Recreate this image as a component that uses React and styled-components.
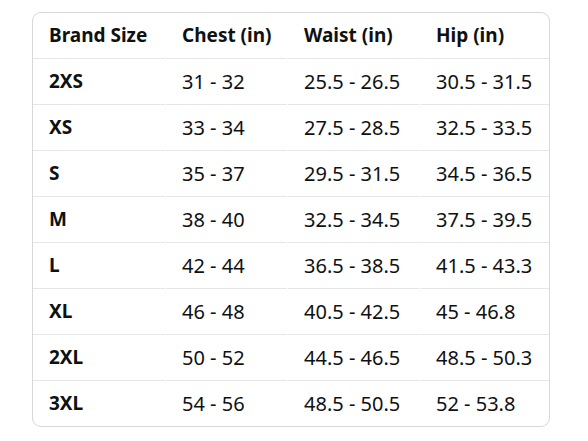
import React from 'react'
import styled, { createGlobalStyle } from 'styled-components'

const Global = createGlobalStyle`
    body {
        margin: 0;
        background: #ffffff;
        font-family: "Noto Sans", "Open Sans", Arial, sans-serif;
        color: #0f1111;
    }
`

const Page = styled.div`
    padding: 12px 0 0 32px;
`

const Card = styled.div`
    width: 516px;
    border: 1px solid #d5d9d9;
    border-radius: 9px;
    overflow: hidden;
`

const Table = styled.table`
    width: 518px;
    border-collapse: separate;
    border-spacing: 1px 0;
    margin: 0 -1px;
    table-layout: fixed;
`

const Cell = styled.td`
    height: 45px;
    padding: 0 0 0 16px;
    font-size: ${({ head }) => (head ? '19px' : '20px')};
    font-weight: ${({ head }) => (head ? 700 : 400)};
    line-height: 1;
    text-align: left;
    vertical-align: middle;
    border-bottom: ${({ last }) => (last ? 'none' : '1px solid #e6e6e6')};
    white-space: nowrap;
`

const headers = ['Brand Size', 'Chest (in)', 'Waist (in)', 'Hip (in)']
const widths = [132, 121, 131, 131]

const rows = [
    ['2XS', '31 - 32', '25.5 - 26.5', '30.5 - 31.5'],
    ['XS', '33 - 34', '27.5 - 28.5', '32.5 - 33.5'],
    ['S', '35 - 37', '29.5 - 31.5', '34.5 - 36.5'],
    ['M', '38 - 40', '32.5 - 34.5', '37.5 - 39.5'],
    ['L', '42 - 44', '36.5 - 38.5', '41.5 - 43.3'],
    ['XL', '46 - 48', '40.5 - 42.5', '45 - 46.8'],
    ['2XL', '50 - 52', '44.5 - 46.5', '48.5 - 50.3'],
    ['3XL', '54 - 56', '48.5 - 50.5', '52 - 53.8'],
]

export default function App() {
    return (
        <Page>
            <Global />
            <Card>
                <Table>
                    <colgroup>
                        {widths.map((w, i) => <col key={i} style={{ width: w }} />)}
                    </colgroup>
                    <thead>
                        <tr>
                            {headers.map(h => <Cell as="th" head key={h}>{h}</Cell>)}
                        </tr>
                    </thead>
                    <tbody>
                        {rows.map((r, ri) => (
                            <tr key={r[0]}>
                                {r.map((c, ci) => (
                                    <Cell key={ci} head={ci === 0} last={ri === rows.length - 1}>{c}</Cell>
                                ))}
                            </tr>
                        ))}
                    </tbody>
                </Table>
            </Card>
        </Page>
    )
}
